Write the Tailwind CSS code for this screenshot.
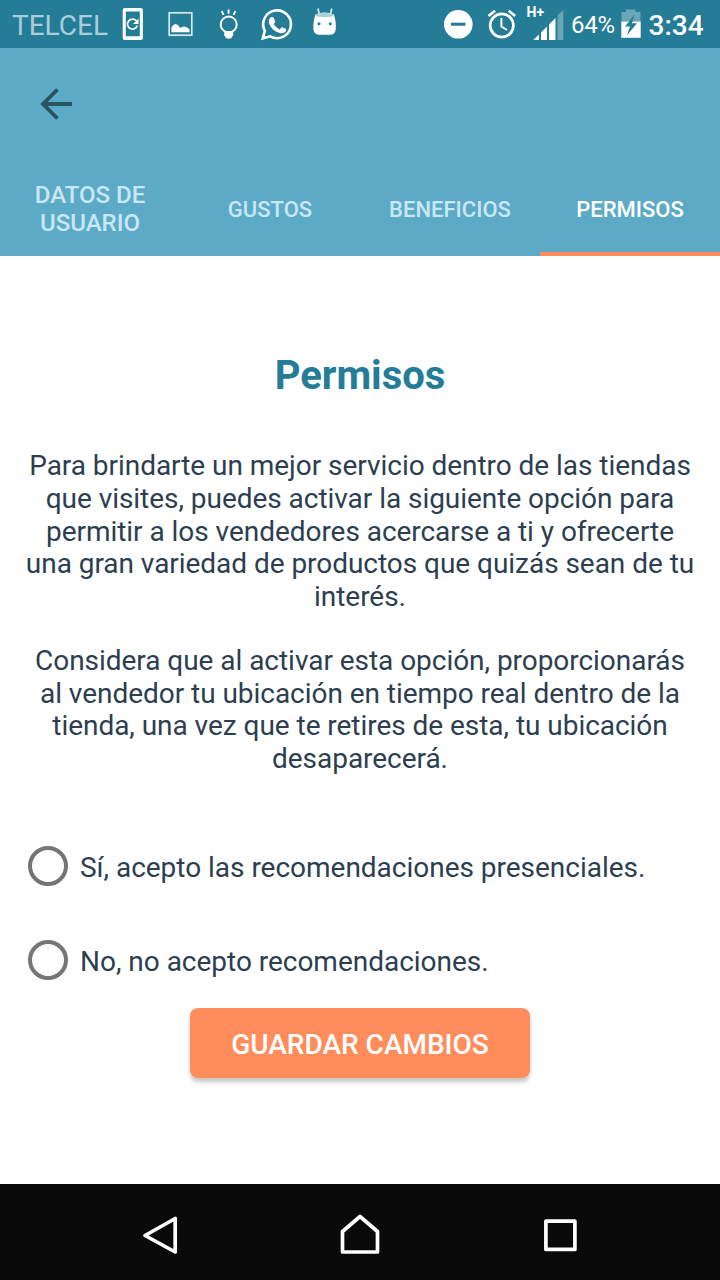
<!DOCTYPE html>
<html lang="es">
<head>
<meta charset="utf-8">
<title>Permisos</title>
<script src="https://cdn.jsdelivr.net/npm/@tailwindcss/browser@4"></script>
</head>
<body class="w-[720px] h-[1280px] overflow-hidden bg-white font-['Roboto',sans-serif] flex flex-col">

<!-- Status bar -->
<div class="h-12 shrink-0 bg-[#257c96] flex items-center text-white whitespace-nowrap">
  <span class="w-[107px] ml-3 text-[28px] leading-8 pt-[3px] text-[#a8cedb]">TELCEL</span>
  <svg class="w-6 h-12 shrink-0 ml-[2px]" viewBox="121 0 24 48" fill="none">
    <path fill="#fff" fill-rule="evenodd" d="M124.700 8h16.200q2 0 2 2v28q0 2-2 2h-16.200q-2 0-2-2V10q0-2 2-2zM125.800 11.500v24.700h14V11.500z"/>
    <path stroke="#fff" stroke-width="1.700" d="M136.300 20.800a5 5 0 1 0 1 4.700"/><path fill="#fff" d="M138.500 18.500v5.500h-5.500z"/>
  </svg>
  <svg class="w-7 h-12 shrink-0 ml-[21px]" viewBox="166 0 28 48" fill="none">
    <rect x="169.200" y="12.800" width="22.600" height="22.400" stroke="#d5eaf0" stroke-width="1.700"/>
    <path fill="#fff" d="M171.500 32.300v-5q1.500-3 4-3.300 3 .5 4.500 4 2-1.500 4-1.500 4 .5 5.500 3v2.800z"/>
  </svg>
  <svg class="w-6 h-12 shrink-0 ml-[23px]" viewBox="217 0 24 48" fill="none" stroke="#fff">
    <circle cx="228.700" cy="24.500" r="8" stroke-width="2"/>
    <path fill="#fff" stroke="none" d="M224.200 31h9v4.500q-1 .5-1.300 2-3.200 2.500-6.400 0-.3-1.500-1.300-2z"/>
    <path stroke-width="1.900" d="M228.600 9.500v4.300M221.800 11l1.700 4M235.300 11l-1.700 4"/>
  </svg>
  <svg class="w-9 h-12 shrink-0 ml-[18px]" viewBox="259 0 36 48" fill="none">
    <path stroke="#fff" stroke-width="2.600" d="M262.800 38.300l2-7.500a13.900 13.900 0 1 1 5.300 5.500z"/>
    <path fill="#fff" d="M270.700 17.300q1.400-.8 2.600 0l1.900 4.100q.1 1-1.500 2.500 2.300 4 6 5.500l2-2.200q.8-.4 4.300 1.800.5.500-.2 2.200-1.700 2.600-5.300 2-8.600-2-11.500-9.900-.8-3.700 1.700-6z"/>
  </svg>
  <svg class="w-[28px] h-12 shrink-0 ml-[15px]" viewBox="310 0 28 48" fill="none">
    <path stroke="#d3e8ee" stroke-width="1.700" d="M317.900 8.500l1.500 6M331.700 8.500l-1.300 6"/>
    <path fill="#fff" d="M315.500 14.500q9-4 18.500 0 2.500 8 1.700 15-.7 5-5 5.300h-12q-4.500-.3-5.200-5.300-.8-7 2-15z"/>
    <path fill="#a9d0db" d="M316 14.500q8.500-3.300 17.500 0 .5 1.500-1 2-7.500 1.500-15.500 0-1.500-.5-1-2z"/>
    <circle cx="319" cy="23.800" r="1.500" fill="#257c96"/><circle cx="330.300" cy="23.800" r="1.500" fill="#257c96"/>
  </svg>
  <svg class="w-8 h-12 shrink-0 ml-[104px]" viewBox="442 0 32 48">
    <circle cx="458.300" cy="24.300" r="14.300" fill="#fff"/><path fill="#257c96" d="M451 22.700h14.500v3H451z"/>
  </svg>
  <svg class="w-8 h-12 shrink-0 ml-[12px]" viewBox="486 0 32 48" fill="none" stroke="#fff">
    <circle cx="501.800" cy="25.500" r="11.600" stroke-width="2.700"/>
    <path stroke-width="2.700" d="M488.500 16l6.500-5.300M515.200 16l-6.500-5.300"/>
    <path stroke-width="2" d="M501.400 18v8.500l5.700 3.500"/>
  </svg>
  <div class="relative w-10 h-12 shrink-0 ml-[7px]">
    <span class="absolute left-[1.500px] top-[5px] text-[14px] leading-[15px] font-bold">H+</span>
    <svg class="w-10 h-12" viewBox="525 0 40 48" fill="#fff">
      <path d="M533.300 40l5.700-5.500V40zM541 32.500l6-6V40h-6zM549 24.500l6.500-6.500v22H549z"/><path fill="#6ba6b8" d="M557.500 15.500L563.300 10v30h-5.800z"/>
    </svg>
  </div>
  <span class="w-[46px] ml-[6px] text-[24px] leading-7 pt-[2px] tracking-[-0.300px]">64%</span>
  <svg class="w-6 h-12 shrink-0 ml-[2px]" viewBox="619 0 24 48">
    <path fill="#6ba6b8" d="M626 9.500h9.500V12h5v9.500h-19V12h4.500z"/><path fill="#fff" d="M621.300 21.500h19.400v16.300h-19.400z"/>
    <path fill="#257c96" d="M634.500 14.500l-9.500 12h5l-3 8.700 10-12h-5z"/>
  </svg>
  <span class="ml-[5.500px] text-[28px] leading-8 pt-[3px] font-medium">3:34</span>
</div>

<!-- Toolbar and tabs -->
<header class="h-[208px] shrink-0 bg-[#5caac6] flex flex-col">
  <div class="h-28 flex items-center pl-8">
    <svg class="w-12 h-12" viewBox="32 80 48 48" fill="none" stroke="#2a5560" stroke-width="3.800"><path d="M72 104H43M57.500 89.500L43 104l14.500 14.500"/></svg>
  </div>
  <nav class="h-24 grid grid-cols-4 text-center font-medium text-[#c9e8f5] text-[22px] leading-7">
    <div class="flex items-center justify-center pt-[2px] text-[24px]">DATOS DE<br>USUARIO</div>
    <div class="flex items-center justify-center pt-[4px]">GUSTOS</div>
    <div class="flex items-center justify-center pt-[4px]">BENEFICIOS</div>
    <div class="flex items-center justify-center pt-[8px] text-white border-b-4 border-[#ff8d5c]">PERMISOS</div>
  </nav>
</header>

<!-- Content -->
<main class="flex-1 flex flex-col text-[#2c3e50] text-[28px] leading-[32.700px]">
  <h1 class="mt-[96px] text-center text-[40px] leading-[48px] font-bold text-[#257c96]">Permisos</h1>
  <div class="mt-[50.200px] text-center whitespace-nowrap tracking-[-0.040px]">
    <p>Para brindarte un mejor servicio dentro de las tiendas<br>que visites, puedes activar la siguiente opción para<br>permitir a los vendedores acercarse a ti y ofrecerte<br>una gran variedad de productos que quizás sean de tu<br>interés.</p>
    <p class="mt-[31.300px]">Considera que al activar esta opción, proporcionarás<br>al vendedor tu ubicación en tiempo real dentro de la<br>tienda, una vez que te retires de esta, tu ubicación<br>desaparecerá.</p>
  </div>
  <div class="mt-[70.200px] ml-7 flex flex-col gap-[54px] tracking-[-0.020px]">
    <label class="flex items-center gap-3 h-10"><span class="w-10 h-10 rounded-full border-4 border-[#757575]"></span><span class="pt-[4.500px]">Sí, acepto las recomendaciones presenciales.</span></label>
    <label class="flex items-center gap-3 h-10"><span class="w-10 h-10 rounded-full border-4 border-[#757575]"></span><span class="pt-[4.500px]">No, no acepto recomendaciones.</span></label>
  </div>
  <button class="mt-7 self-center w-[340px] h-[70px] pt-[4.500px] rounded-lg bg-[#ff8d5c] text-white font-medium shadow-[0_4px_4px_rgba(0,0,0,0.220)]">GUARDAR CAMBIOS</button>
</main>

<!-- Navigation bar -->
<footer class="h-24 shrink-0 bg-[#0a0a0a] flex items-center justify-between px-[136px]">
  <svg class="w-12 h-24" viewBox="136 1184 48 96" fill="none" stroke="#fff" stroke-width="3.700" stroke-linejoin="round"><path d="M145 1235.500l30.200-17v33.500z"/></svg>
  <svg class="w-12 h-24" viewBox="336 1184 48 96" fill="none" stroke="#fff" stroke-width="3.700" stroke-linejoin="round"><path d="M342.500 1252v-20.500l17.500-15 17.500 15V1252z"/></svg>
  <svg class="w-12 h-24" viewBox="536 1184 48 96" fill="none" stroke="#fff" stroke-width="3.700" stroke-linejoin="round"><path d="M545.900 1221.200h29v28.200h-29z"/></svg>
</footer>
</body>
</html>
